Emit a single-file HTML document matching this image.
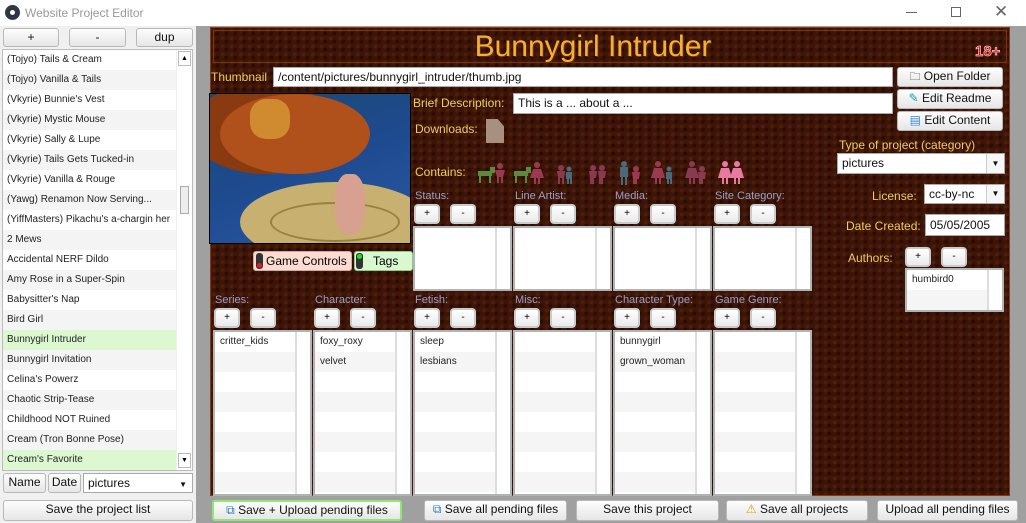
<!DOCTYPE html>
<html><head><meta charset="utf-8">
<style>
*{box-sizing:border-box;margin:0;padding:0}
body{width:1026px;height:523px;overflow:hidden;background:#a0a0a0;font-family:"Liberation Sans",sans-serif;position:relative}
.a{position:absolute}
.title{left:0;top:0;width:1026px;height:26px;background:#fff;font-size:12px;color:#999}
.btn{position:absolute;background:linear-gradient(#fdfdfd,#e6e6e6);border:1px solid #b8b8b8;border-radius:3px;font-size:12px;color:#111;text-align:center;line-height:17px}
.brown{left:210px;top:27px;width:800px;height:469px;border:1px solid #8a3a12;
background-color:#3c1507;
background-image:radial-gradient(circle at 30% 30%,#4e1d0b 1.5px,transparent 2.5px),radial-gradient(circle at 70% 70%,#2a0c04 1.5px,transparent 2.5px);
background-size:9px 8px,9px 8px}
.lbl{position:absolute;color:#f0cc60;font-size:12px;white-space:nowrap}
.tl{position:absolute;color:#9aa0c8;font-size:11px;white-space:nowrap}
.inp{position:absolute;background:#fff;border:1px solid #aaa;font-size:12px;padding:2px 4px;line-height:14px;color:#111;white-space:nowrap;overflow:hidden}
.sb{position:absolute;width:26px;height:20px;background:linear-gradient(#fff,#eaeaea);border:2px solid #c8cccc;border-radius:4px;font-size:10px;text-align:center;line-height:15px}
.lst{position:absolute;background:#fff;border:2px solid #b0b4b4;overflow:hidden}
.lst .r{height:20px;font-size:10px;padding:4px 5px;color:#222;width:80px}
.lst .r:nth-child(even){background:#f5f5f5}
.lst .scr{position:absolute;right:0;top:0;bottom:0;width:15px;border-left:2px solid #ddd;background:#fff}
.li{height:20px;font-size:10px;padding:4px 4px;color:#222;white-space:nowrap;overflow:hidden}
.li:nth-child(even){background:#f4f4f4}
</style></head><body>
<div class="a title">
 <div class="a" style="left:5px;top:5px;width:15px;height:15px;border-radius:50%;background:#333;border:3px solid #2a3a4a"></div>
 <div class="a" style="left:10px;top:10px;width:5px;height:5px;border-radius:50%;background:#fff"></div>
 <div class="a" style="left:25px;top:6px">Website Project Editor</div>
 <div class="a" style="left:906px;top:12px;width:11px;height:1px;background:#666"></div>
 <div class="a" style="left:951px;top:7px;width:10px;height:10px;border:1px solid #666"></div>
 <div class="a" style="left:994px;top:2px;font-size:17px;color:#666">✕</div>
</div>
<div class="a" style="left:0;top:26px;width:196px;height:497px;background:#f0f0f0"></div>
<div class="btn" style="left:3px;top:28px;width:56px;height:19px">+</div>
<div class="btn" style="left:69px;top:28px;width:57px;height:19px">-</div>
<div class="btn" style="left:136px;top:28px;width:57px;height:19px">dup</div>
<div class="a" style="left:2px;top:49px;width:191px;height:422px;background:#fff;border:1px solid #bbb;overflow:hidden">
 <div style="width:173px">
 <div class="li">(Tojyo) Tails &amp; Cream</div>
 <div class="li">(Tojyo) Vanilla &amp; Tails</div>
 <div class="li">(Vkyrie) Bunnie's Vest</div>
 <div class="li">(Vkyrie) Mystic Mouse</div>
 <div class="li">(Vkyrie) Sally &amp; Lupe</div>
 <div class="li">(Vkyrie) Tails Gets Tucked-in</div>
 <div class="li">(Vkyrie) Vanilla &amp; Rouge</div>
 <div class="li">(Yawg) Renamon Now Serving...</div>
 <div class="li">(YiffMasters) Pikachu's a-chargin her</div>
 <div class="li">2 Mews</div>
 <div class="li">Accidental NERF Dildo</div>
 <div class="li">Amy Rose in a Super-Spin</div>
 <div class="li">Babysitter's Nap</div>
 <div class="li">Bird Girl</div>
 <div class="li" style="background:#dcf8d0">Bunnygirl Intruder</div>
 <div class="li">Bunnygirl Invitation</div>
 <div class="li">Celina's Powerz</div>
 <div class="li">Chaotic Strip-Tease</div>
 <div class="li">Childhood NOT Ruined</div>
 <div class="li">Cream (Tron Bonne Pose)</div>
 <div class="li" style="background:#dcf8d0">Cream's Favorite</div>
 </div>
 <div class="a" style="left:173px;top:0;width:16px;height:420px;background:#fff;border-left:1px solid #eee">
  <div class="a" style="left:1px;top:1px;width:13px;height:15px;border:1px solid #bbb;font-size:7px;text-align:center;line-height:13px">▲</div>
  <div class="a" style="left:3px;top:136px;width:9px;height:28px;border:1px solid #aaa;background:#eee"></div>
  <div class="a" style="left:1px;top:403px;width:13px;height:15px;border:1px solid #bbb;font-size:7px;text-align:center;line-height:13px">▼</div>
 </div>
</div>
<div class="btn" style="left:3px;top:473px;width:43px;height:20px;font-size:12px">Name</div>
<div class="btn" style="left:48px;top:473px;width:33px;height:20px">Date</div>
<div class="inp" style="left:83px;top:473px;width:110px;height:20px;font-size:12px">pictures<span class="a" style="right:5px;top:4px;font-size:8px">▼</span></div>
<div class="btn" style="left:3px;top:500px;width:190px;height:21px">Save the project list</div>

<div class="a brown"></div>
<div class="a" style="left:213px;top:30px;width:794px;height:33px;border:1px solid #7a3210"></div>
<div class="a" style="left:213px;top:30px;width:760px;text-align:center;font-size:30px;color:#f4b030;text-shadow:1px 1px 0 #6a2a00">Bunnygirl Intruder</div>
<div class="a" style="left:975px;top:43px;font-size:15px;font-weight:bold;color:#e81010;-webkit-text-stroke:0.5px #fff">18+</div>

<div class="lbl" style="left:211px;top:70px">Thumbnail</div>
<div class="inp" style="left:273px;top:67px;width:620px;height:20px">/content/pictures/bunnygirl_intruder/thumb.jpg</div>
<div class="btn" style="left:897px;top:67px;width:106px;height:20px;font-size:12px"><span style="font-size:11px">🗀</span> Open Folder</div>
<div class="btn" style="left:897px;top:89px;width:106px;height:20px;font-size:12px"><span style="color:#1aa0b0">✎</span> Edit Readme</div>
<div class="btn" style="left:897px;top:111px;width:106px;height:20px;font-size:12px"><span style="color:#3a8ad0">▤</span> Edit Content</div>

<div class="a" style="left:209px;top:93px;width:202px;height:151px;border:1px solid #000;background:linear-gradient(160deg,#1a4a70,#1e4a90 50%,#2a5aa0);overflow:hidden">
 <div class="a" style="left:-20px;top:-10px;width:150px;height:90px;border-radius:50%;background:#8a3a10"></div>
 <div class="a" style="left:10px;top:0;width:150px;height:80px;border-radius:50%;background:#b0501a"></div>
 <div class="a" style="left:30px;top:88px;width:190px;height:80px;border-radius:50%;background:#c8b070"></div>
 <div class="a" style="left:60px;top:108px;width:130px;height:40px;border-radius:50%;border:2px solid #9a8040"></div>
 <div class="a" style="left:40px;top:5px;width:40px;height:40px;border-radius:40%;background:#d08a30"></div>
 <div class="a" style="left:125px;top:80px;width:30px;height:60px;border-radius:40%;background:#d8a090"></div>
</div>
<div class="a" style="left:253px;top:251px;width:99px;height:20px;background:#fcdcd0;border:1px solid #caa;border-radius:3px;font-size:12px;line-height:18px;padding-left:12px">Game Controls</div>
<div class="a" style="left:256px;top:253px;width:7px;height:16px;background:#333;border-radius:3px"><div class="a" style="left:1px;top:10px;width:5px;height:5px;border-radius:50%;background:#e02020"></div></div>
<div class="a" style="left:354px;top:251px;width:59px;height:20px;background:#d8f8d0;border:1px solid #8c8;border-radius:3px;font-size:12px;line-height:18px;padding-left:18px">Tags</div>
<div class="a" style="left:356px;top:253px;width:7px;height:16px;background:#333;border-radius:3px"><div class="a" style="left:1px;top:1px;width:5px;height:5px;border-radius:50%;background:#20e020"></div></div>

<div class="lbl" style="left:413px;top:96px">Brief Description:</div>
<div class="inp" style="left:513px;top:93px;width:380px;height:21px">This is a ... about a ...</div>
<div class="lbl" style="left:415px;top:122px">Downloads:</div>
<div class="a" style="left:486px;top:119px;width:18px;height:24px;background:#a89080;clip-path:polygon(0 0,65% 0,100% 30%,100% 100%,0 100%)"></div>
<div class="lbl" style="left:415px;top:165px">Contains:</div>
<svg class="a" style="left:478px;top:161px" width="270" height="24">
 <g fill="#5a8a3a"><rect x="0" y="10" width="14" height="5"/><rect x="1" y="15" width="2" height="7"/><rect x="11" y="15" width="2" height="7"/><rect x="12" y="6" width="5" height="6"/></g>
 <g fill="#9a3a50"><circle cx="22" cy="5" r="3"/><polygon points="17,9 27,9 25,16 19,16"/><rect x="19" y="16" width="2" height="6"/><rect x="23" y="16" width="2" height="6"/></g>
 <g fill="#5a8a3a"><rect x="36" y="10" width="14" height="5"/><rect x="37" y="15" width="2" height="7"/><rect x="47" y="15" width="2" height="7"/><rect x="48" y="6" width="5" height="6"/></g>
 <g fill="#9a3a50"><circle cx="59" cy="4" r="3"/><polygon points="55,8 63,8 66,17 52,17"/><rect x="56" y="17" width="2" height="6"/><rect x="60" y="17" width="2" height="6"/></g>
 <g fill="#8a3a50"><circle cx="83" cy="7" r="3"/><polygon points="79,10 87,10 86,17 80,17"/><rect x="80" y="17" width="2" height="6"/><rect x="84" y="17" width="2" height="6"/></g>
 <g fill="#4a6a7a"><circle cx="91" cy="8" r="2.5"/><rect x="88" y="11" width="6" height="7"/><rect x="89" y="18" width="2" height="5"/><rect x="92" y="18" width="2" height="5"/></g>
 <g fill="#8a3a50"><circle cx="115" cy="7" r="3"/><polygon points="111,10 119,10 118,17 112,17"/><rect x="112" y="17" width="4" height="6"/><circle cx="124" cy="7" r="3"/><polygon points="120,10 128,10 127,17 121,17"/><rect x="121" y="17" width="4" height="6"/></g>
 <g fill="#4a6a7a"><circle cx="146" cy="3" r="3"/><rect x="142" y="6" width="8" height="10"/><rect x="143" y="16" width="2" height="8"/><rect x="147" y="16" width="2" height="8"/></g>
 <g fill="#9a3a50"><circle cx="158" cy="8" r="3"/><polygon points="154,11 162,11 161,18 155,18"/><rect x="155" y="18" width="4" height="5"/></g>
 <g fill="#9a3a50"><circle cx="180" cy="3" r="3"/><polygon points="176,7 184,7 187,17 173,17"/><rect x="177" y="17" width="2" height="6"/><rect x="181" y="17" width="2" height="6"/></g>
 <g fill="#4a6a7a"><circle cx="191" cy="8" r="2.5"/><rect x="188" y="11" width="6" height="7"/><rect x="189" y="18" width="2" height="5"/><rect x="192" y="18" width="2" height="5"/></g>
 <g fill="#8a3a50"><circle cx="214" cy="3" r="3"/><polygon points="210,7 218,7 221,17 207,17"/><rect x="211" y="17" width="2" height="6"/><rect x="215" y="17" width="2" height="6"/><circle cx="224" cy="8" r="3"/><polygon points="220,11 228,11 227,18 221,18"/><rect x="221" y="18" width="4" height="5"/></g>
 <g fill="#e87aa0"><circle cx="247" cy="3" r="3"/><polygon points="243,7 251,7 254,17 240,17"/><rect x="244" y="17" width="2" height="6"/><rect x="248" y="17" width="2" height="6"/><circle cx="259" cy="3" r="3"/><polygon points="255,7 263,7 266,17 252,17"/><rect x="256" y="17" width="2" height="6"/><rect x="260" y="17" width="2" height="6"/></g>
</svg>

<div class="lbl" style="left:839px;top:138px">Type of project  (category)</div>
<div class="inp" style="left:837px;top:153px;width:168px;height:21px">pictures<span class="a" style="left:148px;top:0;width:18px;height:19px;border-left:1px solid #ccc;background:#f6f6f6;font-size:8px;text-align:center;line-height:19px">▼</span></div>
<div class="lbl" style="left:872px;top:189px">License:</div>
<div class="inp" style="left:924px;top:184px;width:81px;height:20px">cc-by-nc<span class="a" style="left:61px;top:0;width:18px;height:18px;border-left:1px solid #ccc;background:#f6f6f6;font-size:8px;text-align:center;line-height:18px">▼</span></div>
<div class="lbl" style="left:846px;top:219px">Date Created:</div>
<div class="inp" style="left:925px;top:214px;width:80px;height:22px;line-height:16px">05/05/2005</div>
<div class="lbl" style="left:848px;top:251px">Authors:</div>
<div class="sb" style="left:905px;top:247px">+</div>
<div class="sb" style="left:941px;top:247px">-</div>
<div class="lst" style="left:905px;top:268px;width:99px;height:44px"><div class="r">humbird0</div><div class="r"></div><div class="scr"></div></div>

<div class="tl" style="left:415px;top:190px">Status:</div>
<div class="tl" style="left:515px;top:190px">Line Artist:</div>
<div class="tl" style="left:615px;top:190px">Media:</div>
<div class="tl" style="left:715px;top:190px">Site Category:</div>
<div class="sb" style="left:414px;top:204px">+</div><div class="sb" style="left:450px;top:204px">-</div>
<div class="sb" style="left:514px;top:204px">+</div><div class="sb" style="left:550px;top:204px">-</div>
<div class="sb" style="left:614px;top:204px">+</div><div class="sb" style="left:650px;top:204px">-</div>
<div class="sb" style="left:714px;top:204px">+</div><div class="sb" style="left:750px;top:204px">-</div>
<div class="lst" style="left:413px;top:226px;width:99px;height:65px"><div class="scr"></div></div>
<div class="lst" style="left:513px;top:226px;width:99px;height:65px"><div class="scr"></div></div>
<div class="lst" style="left:613px;top:226px;width:99px;height:65px"><div class="scr"></div></div>
<div class="lst" style="left:713px;top:226px;width:99px;height:65px"><div class="scr"></div></div>

<div class="tl" style="left:215px;top:294px">Series:</div>
<div class="tl" style="left:315px;top:294px">Character:</div>
<div class="tl" style="left:415px;top:294px">Fetish:</div>
<div class="tl" style="left:515px;top:294px">Misc:</div>
<div class="tl" style="left:615px;top:294px">Character Type:</div>
<div class="tl" style="left:715px;top:294px">Game Genre:</div>
<div class="sb" style="left:214px;top:308px">+</div><div class="sb" style="left:250px;top:308px">-</div>
<div class="sb" style="left:314px;top:308px">+</div><div class="sb" style="left:350px;top:308px">-</div>
<div class="sb" style="left:414px;top:308px">+</div><div class="sb" style="left:450px;top:308px">-</div>
<div class="sb" style="left:514px;top:308px">+</div><div class="sb" style="left:550px;top:308px">-</div>
<div class="sb" style="left:614px;top:308px">+</div><div class="sb" style="left:650px;top:308px">-</div>
<div class="sb" style="left:714px;top:308px">+</div><div class="sb" style="left:750px;top:308px">-</div>
<div class="lst" style="left:213px;top:330px;width:99px;height:166px"><div class="r">critter_kids</div><div class="r"></div><div class="r"></div><div class="r"></div><div class="r"></div><div class="r"></div><div class="r"></div><div class="r"></div><div class="scr"></div></div>
<div class="lst" style="left:313px;top:330px;width:99px;height:166px"><div class="r">foxy_roxy</div><div class="r">velvet</div><div class="r"></div><div class="r"></div><div class="r"></div><div class="r"></div><div class="r"></div><div class="r"></div><div class="scr"></div></div>
<div class="lst" style="left:413px;top:330px;width:99px;height:166px"><div class="r">sleep</div><div class="r">lesbians</div><div class="r"></div><div class="r"></div><div class="r"></div><div class="r"></div><div class="r"></div><div class="r"></div><div class="scr"></div></div>
<div class="lst" style="left:513px;top:330px;width:99px;height:166px"><div class="r"></div><div class="r"></div><div class="r"></div><div class="r"></div><div class="r"></div><div class="r"></div><div class="r"></div><div class="r"></div><div class="scr"></div></div>
<div class="lst" style="left:613px;top:330px;width:99px;height:166px"><div class="r">bunnygirl</div><div class="r">grown_woman</div><div class="r"></div><div class="r"></div><div class="r"></div><div class="r"></div><div class="r"></div><div class="r"></div><div class="scr"></div></div>
<div class="lst" style="left:713px;top:330px;width:99px;height:166px"><div class="r"></div><div class="r"></div><div class="r"></div><div class="r"></div><div class="r"></div><div class="r"></div><div class="r"></div><div class="r"></div><div class="scr"></div></div>

<div class="a" style="left:196px;top:496px;width:830px;height:27px;background:#a0a0a0"></div>
<div class="btn" style="left:212px;top:500px;width:190px;height:21px;border:2px solid #90e870;line-height:16px"><span style="color:#2a7ac0">⧉</span> Save + Upload pending files</div>
<div class="btn" style="left:424px;top:500px;width:143px;height:21px"><span style="color:#2a7ac0">⧉</span> Save all pending files</div>
<div class="btn" style="left:576px;top:500px;width:143px;height:21px">Save this project</div>
<div class="btn" style="left:726px;top:500px;width:142px;height:21px"><span style="color:#e0a000">⚠</span> Save all projects</div>
<div class="btn" style="left:877px;top:500px;width:141px;height:21px">Upload all pending files</div>
</body></html>
